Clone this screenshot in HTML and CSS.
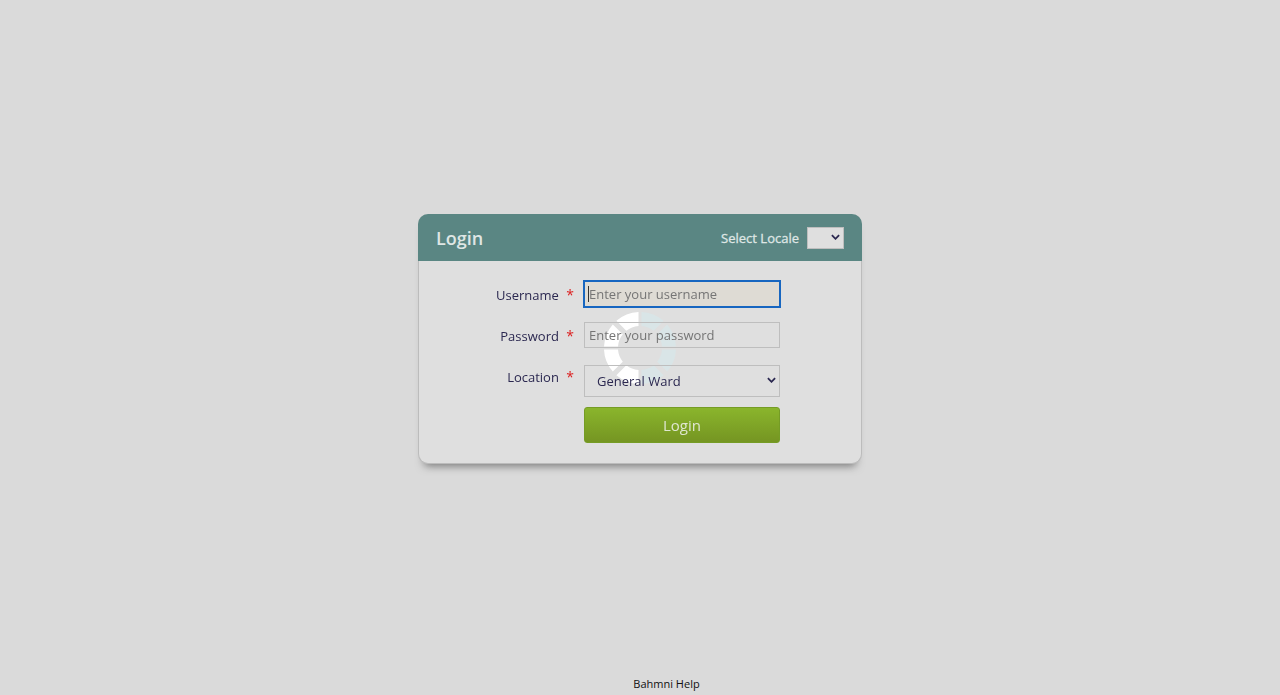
FILE: index.html
```html
<!DOCTYPE html>
<html lang="en">
<head>
<meta charset="utf-8">
<title>Login</title>
<link rel="stylesheet" href="styles.css">
</head>
<body>
<main class="stage">
  <form class="card">
    <header class="card-head">
      <h1 class="title">Login</h1>
      <label class="locale-label" for="locale">Select Locale</label>
      <span class="select-wrap"><select class="locale" id="locale"><option></option></select><svg class="chevron" viewBox="0 0 10 6"><path d="M1 1l4 4 4-4"/></svg></span>
    </header>
    <div class="fields">
      <label class="label" for="username">Username <span class="star">*</span></label>
      <input class="input" id="username" type="text" placeholder="Enter your username" autofocus>
      <label class="label" for="password">Password <span class="star">*</span></label>
      <input class="input" id="password" type="password" placeholder="Enter your password">
      <label class="label" for="location">Location <span class="star">*</span></label>
      <span class="select-wrap location-wrap"><select class="location" id="location"><option>General Ward</option></select><svg class="chevron" viewBox="0 0 10 6"><path d="M1 1l4 4 4-4"/></svg></span>
      <button class="submit" type="button">Login</button>
    </div>
  </form>
</main>
<footer class="footer"><a class="help" href="#">Bahmni Help</a></footer>
<svg class="spinner" viewBox="-36 -36 72 72" aria-hidden="true">
  <defs>
    <path id="seg" d="M1.5 -36A36 36 0 0 1 23.6 -27.2L13.7 -17.2A22 22 0 0 0 1.5 -22Z"/>
    <g id="quarter"><use href="#seg"/><use href="#seg" transform="matrix(0 -1 -1 0 0 0)"/></g>
  </defs>
  <g class="pale"><use href="#quarter"/><use href="#quarter" transform="rotate(90)"/></g>
  <g class="white"><use href="#quarter" transform="rotate(180)"/><use href="#quarter" transform="rotate(270)"/></g>
</svg>
</body>
</html>
```
FILE: styles.css
```css
* { box-sizing: border-box; }
body {
  margin: 0;
  min-height: 100vh;
  display: flex;
  flex-direction: column;
  background: #dadada;
  color: #2b2850;
  font: 13px/20px "Open Sans", sans-serif;
}
.stage {
  flex: 1;
  display: flex;
  align-items: center;
  justify-content: center;
  padding-top: 5px;
}
.card {
  width: 444px;
  max-width: 100%;
  border: 1px solid #bcbcbc;
  border-top: 0;
  border-radius: 10px;
  background: #dfdfdf;
  box-shadow: 0 8px 8px -6px #777;
}
.card-head {
  display: flex;
  align-items: center;
  margin: 0 -1px;
  padding: 12px 18px;
  height: 47px;
  border-radius: 10px 10px 0 0;
  background: #5a8683;
  color: #dfe6e5;
}
.title {
  flex: 1;
  margin: 0;
  font-size: 18px;
  font-weight: 600;
  line-height: 22px;
}
.locale-label { margin-right: 8px; -webkit-text-stroke: 0.3px; }
.select-wrap { position: relative; display: flex; }
select {
  appearance: none;
  border: 1px solid #bebebe;
  border-radius: 0;
  background: #dfdfdf;
  color: inherit;
  font: inherit;
}
.locale { width: 37px; height: 22px; }
.chevron {
  position: absolute;
  right: 4px;
  top: 50%;
  width: 9px;
  height: 6px;
  margin-top: -4px;
  fill: none;
  stroke: #2b2850;
  stroke-width: 2;
  pointer-events: none;
}
.fields {
  position: relative;
  z-index: 2;
  display: grid;
  grid-template-columns: 155px 196px;
  column-gap: 10px;
  padding: 20px 0;
}
.label { padding-top: 4px; text-align: right; }
.star { margin-left: 4px; color: #dc2020; font-size: 14px; }
.input {
  height: 26px;
  margin-bottom: 15px;
  padding: 0 4px;
  border: 1px solid #bebebe;
  background: transparent;
  color: #2b2850;
  font: inherit;
}
.input::placeholder { color: #757575; }
.input:focus {
  outline: 2px solid #1766c0;
  outline-offset: -1px;
  background: linear-gradient(#333, #333) 3px center / 1px 16px no-repeat #dedbd4;
}
.location-wrap { margin: 2px 0 10px; }
.location { width: 100%; height: 32px; padding: 0 12px; background: transparent; }
.submit {
  grid-column: 2;
  height: 36px;
  border: 1px solid #759c25;
  border-radius: 3px;
  background: linear-gradient(#8ab52c, #759522);
  color: #dfe6d0;
  font: 15px/20px "Open Sans", sans-serif;
}
.footer { padding-left: 53px; text-align: center; font-size: 11px; line-height: 22px; }
.help { color: #111; text-decoration: none; }
.spinner {
  position: fixed;
  z-index: 1;
  left: calc(50% - 36px);
  top: calc(50% - 36px);
  width: 72px;
  height: 72px;
  pointer-events: none;
}
.pale { fill: #d9e5e7; }
.white { fill: #fff; }
```
